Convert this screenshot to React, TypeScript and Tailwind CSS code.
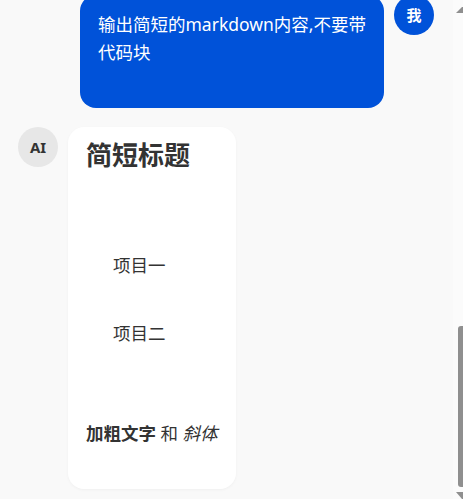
import { useEffect, useRef } from "react";

type Msg = { role: "user" | "ai"; body: React.ReactNode };

const history: Msg[] = [
  {
    role: "user",
    body: <p>你好,请简单介绍一下你自己</p>,
  },
  {
    role: "ai",
    body: (
      <>
        <p className="mb-[16px]">你好!我是一个AI助手,可以回答问题、写作、翻译和整理资料。</p>
        <p>有什么可以帮你的吗?</p>
      </>
    ),
  },
  {
    role: "user",
    body: <p>用三句话说明什么是markdown</p>,
  },
  {
    role: "ai",
    body: (
      <>
        <p className="mb-[16px]">Markdown 是一种轻量级标记语言。</p>
        <p className="mb-[16px]">它用简单的符号表示标题、列表和强调等格式。</p>
        <p>写好的文本可以很方便地转换成 HTML。</p>
      </>
    ),
  },
];

function Avatar({ role }: { role: "user" | "ai" }) {
  if (role === "user") {
    return (
      <div className="w-10 h-10 shrink-0 rounded-full bg-[#0052d9] text-white font-bold text-[15px] flex items-center justify-center">
        我
      </div>
    );
  }
  return (
    <div className="w-10 h-10 shrink-0 rounded-full bg-[#e7e7e7] text-[#333] font-bold text-[15px] flex items-center justify-center">
      AI
    </div>
  );
}

function Row({ role, children }: { role: "user" | "ai"; children: React.ReactNode }) {
  if (role === "user") {
    return (
      <div className="flex justify-end items-start gap-[10px]">
        <div className="max-w-[304px] rounded-2xl bg-[#0052d9] text-white px-[18px] pt-[15px] pb-[42px]">
          {children}
        </div>
        <Avatar role="user" />
      </div>
    );
  }
  return (
    <div className="flex items-start gap-[10px]">
      <Avatar role="ai" />
      <div className="max-w-[304px] rounded-2xl bg-white text-[#333] px-[18px] pt-[12px] pb-[42px] shadow-[0_1px_3px_rgba(0,0,0,0.04)]">
        {children}
      </div>
    </div>
  );
}

function Scrollbar() {
  return (
    <div className="w-[10px] h-full flex flex-col items-end bg-[#fbfbfb]">
      <svg width="7" height="7" viewBox="0 0 7 7" className="mt-[7px]">
        <path d="M0 6 L6 0 L7 0 L7 6 Z" fill="#8f8f8f" />
      </svg>
      <div className="flex-1" />
      <div className="w-[5px] h-[161px] rounded-l-[3px] bg-[#8f8f8f]" />
      <svg width="7" height="7" viewBox="0 0 7 7" className="mt-[5px]">
        <path d="M0 0 L7 0 L7 7 L6 7 Z" fill="#8f8f8f" />
      </svg>
    </div>
  );
}

export default function App() {
  const ref = useRef<HTMLDivElement>(null);

  useEffect(() => {
    if (ref.current) ref.current.scrollTop = ref.current.scrollHeight;
  }, []);

  return (
    <div
      className="h-[499px] flex bg-[#f9f9f9] text-[17.5px] leading-[28px]"
      style={{ fontFamily: '"Noto Sans", "Noto Sans CJK SC", sans-serif' }}
    >
      <div ref={ref} className="flex-1 h-full overflow-y-scroll [scrollbar-width:none]">
        <div className="flex flex-col gap-[19px] pl-[18px] pr-[19px] pt-[18px] pb-[10px]">
          {history.map((m, i) => (
            <Row key={i} role={m.role}>
              {m.body}
            </Row>
          ))}

          <Row role="user">
            <p>输出简短的markdown内容,不要带代码块</p>
          </Row>

          <Row role="ai">
            <h2 className="text-[26px] leading-[33px] font-bold mb-[79px]">简短标题</h2>
            <ul className="pl-[27px] mb-[72px]">
              <li className="mb-[40px]">项目一</li>
              <li>项目二</li>
            </ul>
            <p>
              <strong className="font-bold">加粗文字</strong> 和 <em className="italic">斜体</em>
            </p>
          </Row>
        </div>
      </div>
      <Scrollbar />
    </div>
  );
}
